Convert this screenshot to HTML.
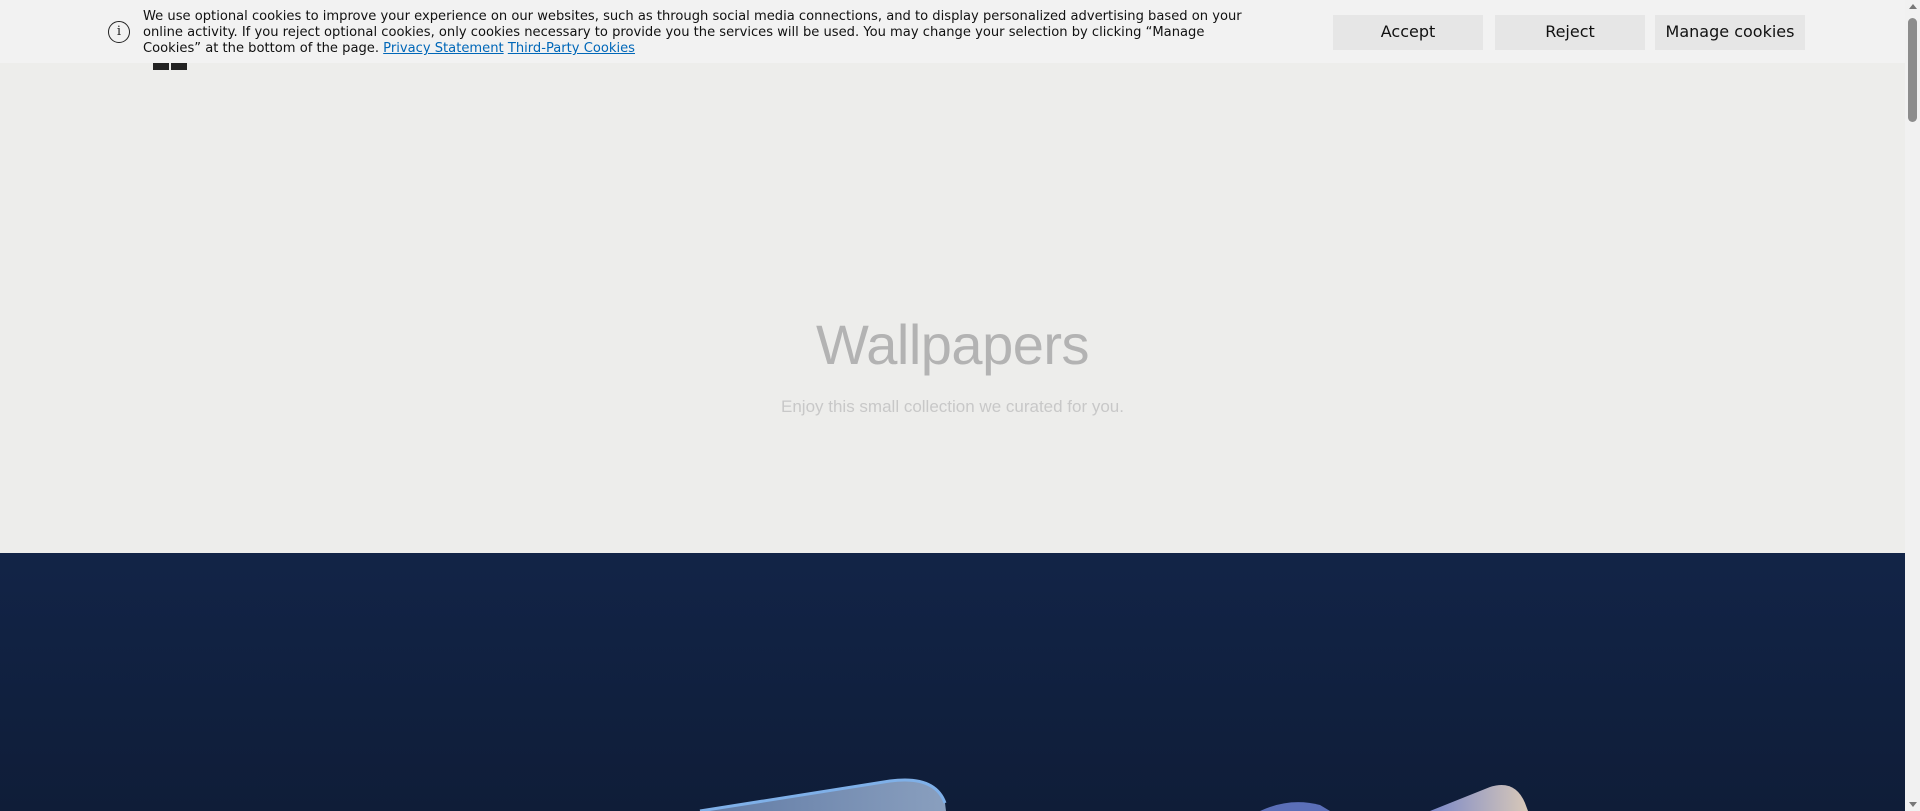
<!DOCTYPE html>
<html><head><meta charset="utf-8"><style>
html,body{margin:0;padding:0;width:1920px;height:811px;overflow:hidden;background:#ededeb;font-family:"Liberation Sans",sans-serif}
.banner{position:absolute;left:0;top:0;width:1905px;height:63px;background:#f2f2f2;z-index:2}
.info{position:absolute;left:108px;top:21px;width:22px;height:22px;border:1.5px solid #222;border-radius:50%;box-sizing:border-box;font:13px "DejaVu Serif",serif;text-align:center;line-height:19px;color:#222}
.txt{position:absolute;left:143px;top:9px;width:1100px;font-size:13.1px;line-height:16px;color:#111;font-family:"DejaVu Sans",sans-serif}
.txt a{color:#0067b8;text-decoration:underline}
.btn{position:absolute;top:15px;height:35px;background:#e6e6e6;font-family:"DejaVu Sans",sans-serif;font-size:16px;color:#111;text-align:center;line-height:34px}
.hero{position:absolute;left:0;top:63px;width:1905px;height:490px;background:#ededeb}
h1{position:absolute;left:0;width:1905px;top:312px;margin:0;text-align:center;font-weight:normal;font-size:56px;color:#b3b3b3;letter-spacing:-0.5px}
.sub{position:absolute;left:0;width:1905px;top:397px;text-align:center;font-size:17px;color:#c8c8c8}
.dark{position:absolute;left:0;top:553px;width:1905px;height:258px;background:linear-gradient(#122447,#0f1d38)}
.sb{position:absolute;right:0;top:0;width:15px;height:811px;background:#f1f1f1}
.thumb{position:absolute;right:3px;top:18px;width:9px;height:104px;background:#8c8c8c;border-radius:5px}
</style></head><body>
<div class="hero"></div>
<div style="position:absolute;left:153px;top:63px;width:16px;height:7px;background:#222"></div>
<div style="position:absolute;left:171px;top:63px;width:16px;height:7px;background:#222"></div>
<h1>Wallpapers</h1>
<div class="sub">Enjoy this small collection we curated for you.</div>
<div class="dark">
<svg width="1905" height="258" style="position:absolute;left:0;top:0">
<defs><linearGradient id="g1" x1="0" y1="0" x2="1" y2="0"><stop offset="0" stop-color="#6f8bb8"/><stop offset="1" stop-color="#9fb6d6"/></linearGradient>
<linearGradient id="g2" x1="0" y1="0" x2="1" y2="0"><stop offset="0" stop-color="#7a88c8"/><stop offset="1" stop-color="#d8c8b8"/></linearGradient></defs>
<path d="M700 258 L890 228 Q935 222 945 250 L946 258 Z" fill="url(#g1)" opacity="0.85"/>
<path d="M700 258 L890 228 Q935 222 945 250" fill="none" stroke="#7fb0e8" stroke-width="3"/>
<path d="M1260 258 Q1290 244 1320 252 L1330 258 Z" fill="#5b6fb8"/>
<path d="M1430 258 L1490 234 Q1515 226 1525 250 L1528 258 Z" fill="url(#g2)"/>
</svg>
</div>
<div class="banner">
<div class="info">i</div>
<div class="txt">We use optional cookies to improve your experience on our websites, such as through social media connections, and to display personalized advertising based on your online activity. If you reject optional cookies, only cookies necessary to provide you the services will be used. You may change your selection by clicking “Manage Cookies” at the bottom of the page. <a>Privacy Statement</a> <a>Third-Party Cookies</a></div>
<div class="btn" style="left:1333px;width:150px">Accept</div>
<div class="btn" style="left:1495px;width:150px">Reject</div>
<div class="btn" style="left:1655px;width:150px">Manage cookies</div>
</div>
<div class="sb"><div class="thumb"></div>
<div style="position:absolute;left:4px;top:4px;border:4px solid transparent;border-bottom:5px solid #777;border-top:0"></div>
<div style="position:absolute;left:4px;bottom:4px;border:4px solid transparent;border-top:5px solid #777;border-bottom:0"></div></div>
</body></html>
